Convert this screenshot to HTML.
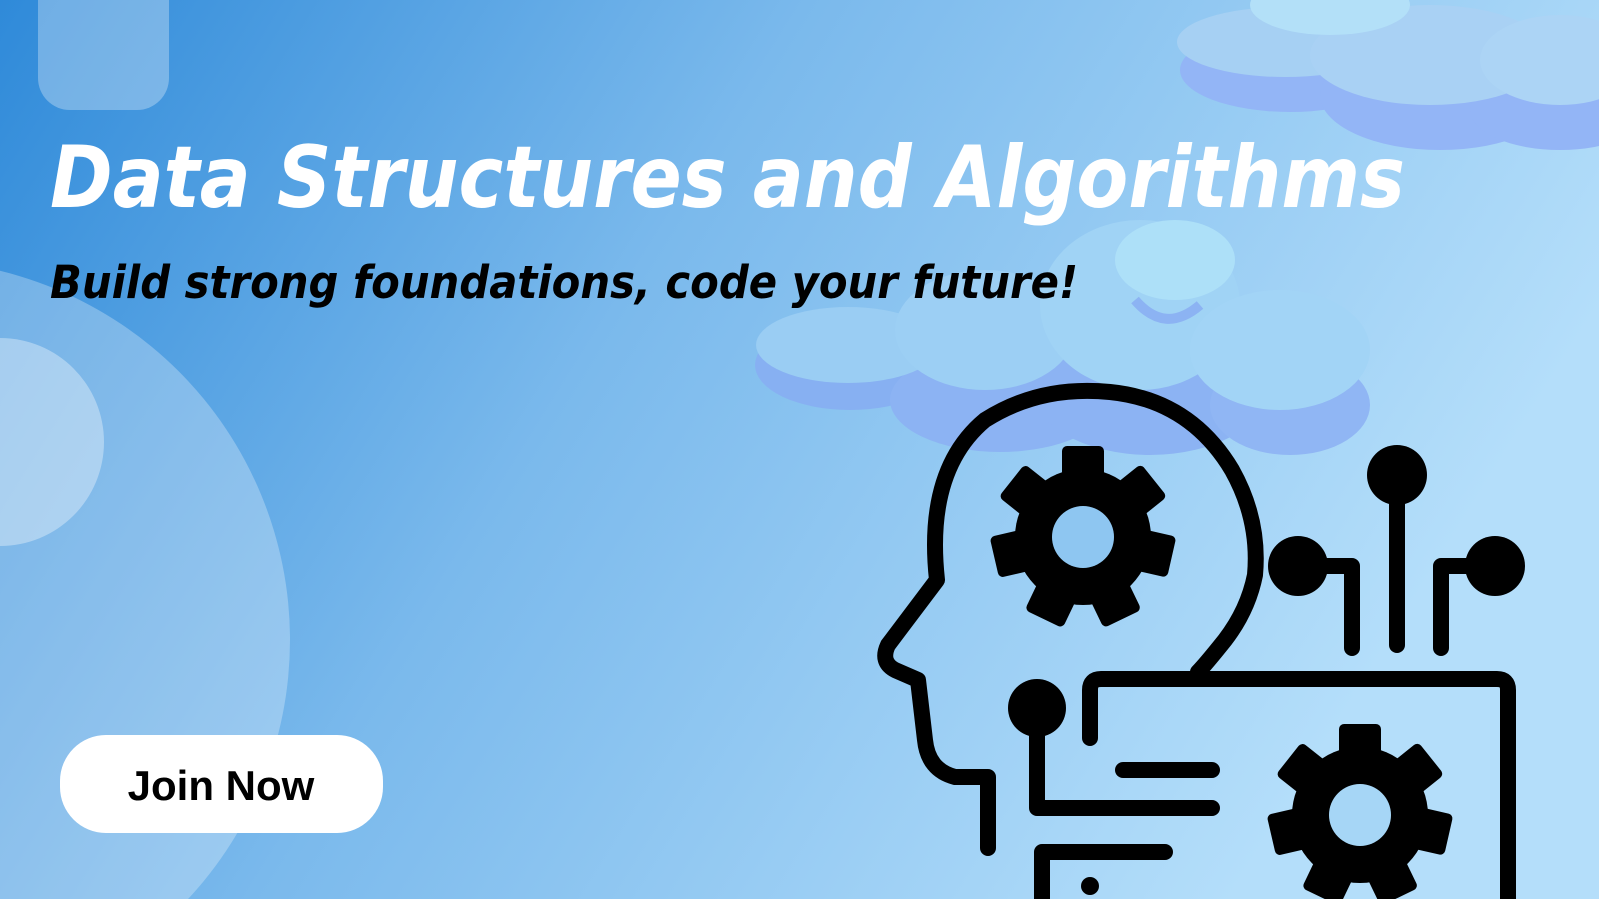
<!DOCTYPE html>
<html><head><meta charset="utf-8"><style>
html,body{margin:0;padding:0;width:1599px;height:899px;overflow:hidden}
svg{display:block;position:absolute;left:0;top:0}
</style></head><body>
<svg width="1599" height="899" viewBox="0 0 1599 899" xmlns="http://www.w3.org/2000/svg">
<defs>
<linearGradient id="bg" x1="0" y1="0" x2="1" y2="0.35">
<stop offset="0" stop-color="#2f8ad9"/>
<stop offset="0.45" stop-color="#7ab9ec"/>
<stop offset="1" stop-color="#b4defa"/>
</linearGradient>
</defs>
<rect width="1599" height="899" fill="url(#bg)"/>
<circle cx="-90" cy="640" r="380" fill="#ffffff" opacity="0.28"/>
<circle cx="0" cy="442" r="104" fill="#ffffff" opacity="0.35"/>
<rect x="38" y="-40" width="131" height="150" rx="32" fill="#ffffff" opacity="0.3"/>
<g>
<ellipse cx="1290" cy="70" rx="110" ry="42" fill="#93b5f6"/>
<ellipse cx="1440" cy="95" rx="120" ry="55" fill="#93b5f6"/>
<ellipse cx="1560" cy="110" rx="90" ry="40" fill="#93b5f6"/>
<ellipse cx="1285" cy="42" rx="108" ry="35" fill="#a6d0f3"/>
<ellipse cx="1430" cy="55" rx="120" ry="50" fill="#a9d1f4"/>
<ellipse cx="1330" cy="5" rx="80" ry="30" fill="#b3e0f8"/>
<ellipse cx="1560" cy="60" rx="80" ry="45" fill="#acd4f5"/>
</g>
<g>
<ellipse cx="850" cy="365" rx="95" ry="45" fill="#87b0f2"/>
<ellipse cx="1000" cy="400" rx="110" ry="52" fill="#8cb3f3"/>
<ellipse cx="1150" cy="385" rx="120" ry="70" fill="#8cb3f3"/>
<ellipse cx="1290" cy="405" rx="80" ry="50" fill="#90b6f4"/>
<ellipse cx="848" cy="345" rx="92" ry="38" fill="#9acdf3"/>
<ellipse cx="985" cy="330" rx="90" ry="60" fill="#9ccff4"/>
<ellipse cx="1140" cy="305" rx="100" ry="85" fill="#a0d3f5"/>
<ellipse cx="1280" cy="350" rx="90" ry="60" fill="#a2d4f6"/>
<ellipse cx="1175" cy="260" rx="60" ry="40" fill="#ade0f8"/>
<path d="M1135 300 Q1165 335 1200 305" stroke="#8cb3f3" stroke-width="10" fill="none"/>
</g>
<g fill="none" stroke="#000" stroke-width="16" stroke-linecap="round" stroke-linejoin="round">
<path d="M988 848 L988 777 L955 777 Q928 770 925 740 L918 680 L895 670 Q880 662 888 645 L937 580 Q925 470 985 420 Q1040 385 1110 392 Q1190 400 1232 470 Q1260 520 1255 575 Q1248 610 1225 640 Q1205 665 1198 672"/>
<path d="M1090 738 L1090 690 Q1090 679 1101 679 L1497 679 Q1508 679 1508 690 L1508 899"/>
<path d="M1037 708 L1037 808 L1212 808"/>
<path d="M1123 770 L1212 770"/>
<path d="M1042 899 L1042 852 L1165 852"/>
<path d="M1397 475 L1397 645"/>
<path d="M1298 566 L1352 566 L1352 648"/>
<path d="M1495 566 L1441 566 L1441 648"/>
</g>
<g fill="#000">
<circle cx="1037" cy="708" r="29"/>
<circle cx="1397" cy="475" r="30"/>
<circle cx="1298" cy="566" r="30"/>
<circle cx="1495" cy="566" r="30"/>
<circle cx="1090" cy="886" r="9"/>
</g>
<g transform="translate(1083,537)">
<circle r="68" fill="#000"/>
<g fill="#000">
<rect x="-21" y="-91" width="42" height="40" rx="5"/>
<rect x="-21" y="-91" width="42" height="40" rx="5" transform="rotate(51.4)"/>
<rect x="-21" y="-91" width="42" height="40" rx="5" transform="rotate(102.8)"/>
<rect x="-21" y="-91" width="42" height="40" rx="5" transform="rotate(154.2)"/>
<rect x="-21" y="-91" width="42" height="40" rx="5" transform="rotate(205.6)"/>
<rect x="-21" y="-91" width="42" height="40" rx="5" transform="rotate(257)"/>
<rect x="-21" y="-91" width="42" height="40" rx="5" transform="rotate(308.4)"/>
</g>
<circle r="31" fill="#8ec6f1"/>
</g>
<g transform="translate(1360,815)">
<circle r="68" fill="#000"/>
<g fill="#000">
<rect x="-21" y="-91" width="42" height="40" rx="5"/>
<rect x="-21" y="-91" width="42" height="40" rx="5" transform="rotate(51.4)"/>
<rect x="-21" y="-91" width="42" height="40" rx="5" transform="rotate(102.8)"/>
<rect x="-21" y="-91" width="42" height="40" rx="5" transform="rotate(154.2)"/>
<rect x="-21" y="-91" width="42" height="40" rx="5" transform="rotate(205.6)"/>
<rect x="-21" y="-91" width="42" height="40" rx="5" transform="rotate(257)"/>
<rect x="-21" y="-91" width="42" height="40" rx="5" transform="rotate(308.4)"/>
</g>
<circle r="31" fill="#a6d6f6"/>
</g>
<text x="50" y="207" fill="#fff" font-family="'DejaVu Sans', 'Liberation Sans', sans-serif" font-weight="bold" font-style="italic" font-size="86" textLength="1355" lengthAdjust="spacingAndGlyphs">Data Structures and Algorithms</text>
<text x="50" y="298" fill="#000" font-family="'DejaVu Sans', 'Liberation Sans', sans-serif" font-weight="bold" font-style="italic" font-size="45" textLength="1028" lengthAdjust="spacingAndGlyphs">Build strong foundations, code your future!</text>
<rect x="60" y="735" width="323" height="98" rx="46" fill="#fff"/>
<text x="221" y="800" text-anchor="middle" fill="#000" font-family="'Liberation Sans', sans-serif" font-weight="bold" font-size="42">Join Now</text>
</svg>
</body></html>
